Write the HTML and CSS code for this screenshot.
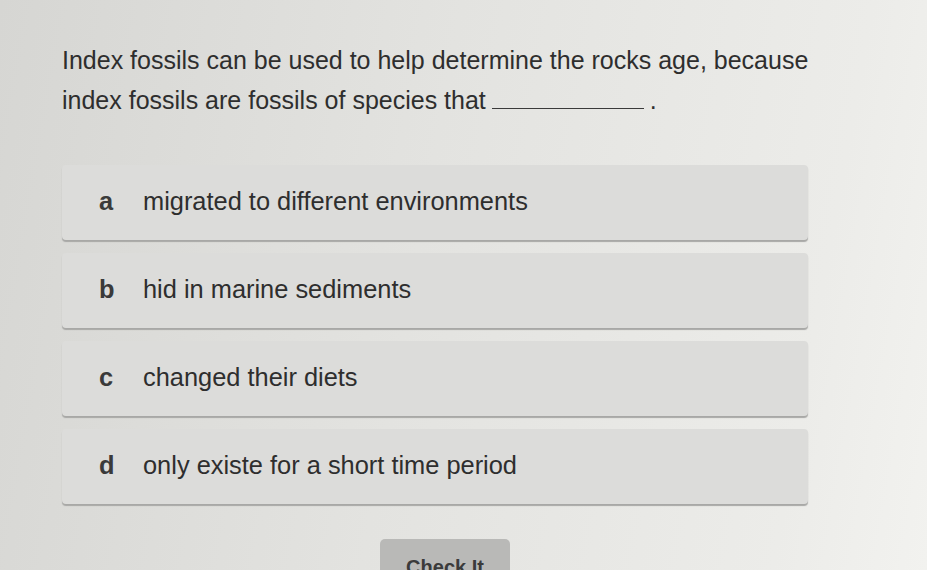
FILE: index.html
```html
<!DOCTYPE html>
<html lang="en">
  <head>
    <meta charset="UTF-8" />
    <meta name="viewport" content="width=device-width, initial-scale=1.0" />
    <title>Index Fossils</title>
    <link rel="stylesheet" href="styles.css">
  </head>
  <body>
    <div class="quiz">
      <p class="question">
        Index fossils can be used to help determine the rocks age, because<br />
        index fossils are fossils of species that<span class="blank"></span>.
      </p>

      <div class="options">
        <div class="option"><span class="letter">a</span><span>migrated to different environments</span></div>
        <div class="option"><span class="letter">b</span><span>hid in marine sediments</span></div>
        <div class="option"><span class="letter">c</span><span>changed their diets</span></div>
        <div class="option"><span class="letter">d</span><span>only existe for a short time period</span></div>
      </div>

      <div class="actions">
        <button class="check">Check It</button>
      </div>
    </div>
  </body>
</html>
```

FILE: styles.css
```css
* {
  margin: 0;
  padding: 0;
  box-sizing: border-box;
}

body {
  font-family: "Liberation Sans", Arial, sans-serif;
  color: #2e2e2e;
  height: 100vh;
  overflow: hidden;
  background: linear-gradient(100deg, #d6d6d3 0%, #e3e3e0 45%, #ecece9 85%, #f2f2ef 100%);
}

.quiz {
  padding: 40px 0 0 62px;
  width: 808px;
}

.question {
  font-size: 25px;
  line-height: 40px;
  white-space: nowrap;
}

.blank {
  display: inline-block;
  width: 152px;
  margin-left: 6px;
  margin-right: 6px;
  border-bottom: 1px solid #3a3a3a;
}

.options {
  margin-top: 45px;
  display: flex;
  flex-direction: column;
  gap: 13px;
}

.option {
  height: 75px;
  display: flex;
  align-items: center;
  padding-left: 37px;
  padding-bottom: 2px;
  font-size: 25.4px;
  background: #dcdcda;
  border-radius: 4px;
  box-shadow: 0 2px 1px #a8a8a6;
}

.letter {
  width: 44px;
  font-weight: bold;
  color: #3a3a3a;
}

.actions {
  display: flex;
  justify-content: center;
  margin-top: 35px;
  padding-left: 20px;
}

.check {
  width: 130px;
  height: 44px;
  font-family: "Liberation Sans", Arial, sans-serif;
  font-size: 20px;
  font-weight: bold;
  color: #3b3b3b;
  background: #b9b9b7;
  border: none;
  border-radius: 5px;
  padding-top: 12px;
}
```
